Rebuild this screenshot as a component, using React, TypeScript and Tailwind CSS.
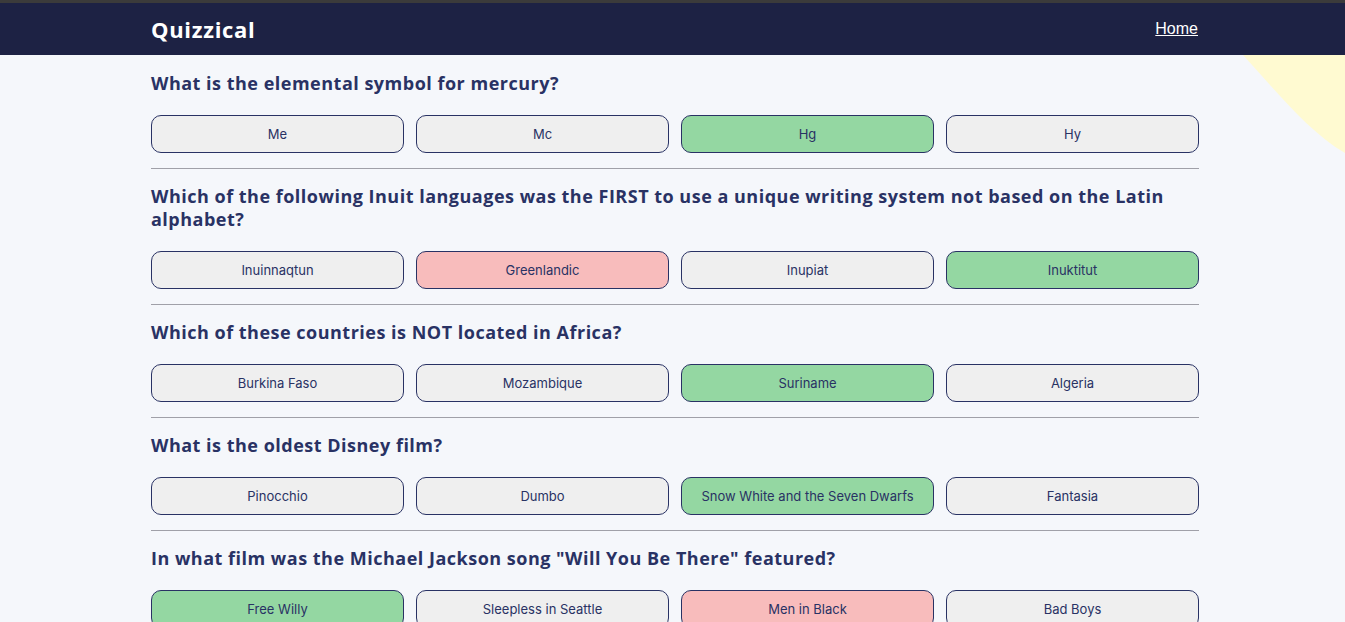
import React from "react";

type Q = { q: string; answers: { t: string; s?: "g" | "r" }[] };

const data: Q[] = [
  {
    q: "What is the elemental symbol for mercury?",
    answers: [{ t: "Me" }, { t: "Mc" }, { t: "Hg", s: "g" }, { t: "Hy" }],
  },
  {
    q: "Which of the following Inuit languages was the FIRST to use a unique writing system not based on the Latin alphabet?",
    answers: [{ t: "Inuinnaqtun" }, { t: "Greenlandic", s: "r" }, { t: "Inupiat" }, { t: "Inuktitut", s: "g" }],
  },
  {
    q: "Which of these countries is NOT located in Africa?",
    answers: [{ t: "Burkina Faso" }, { t: "Mozambique" }, { t: "Suriname", s: "g" }, { t: "Algeria" }],
  },
  {
    q: "What is the oldest Disney film?",
    answers: [{ t: "Pinocchio" }, { t: "Dumbo" }, { t: "Snow White and the Seven Dwarfs", s: "g" }, { t: "Fantasia" }],
  },
  {
    q: 'In what film was the Michael Jackson song "Will You Be There" featured?',
    answers: [{ t: "Free Willy", s: "g" }, { t: "Sleepless in Seattle" }, { t: "Men in Black", s: "r" }, { t: "Bad Boys" }],
  },
];

export default function App() {
  return (
    <div className="min-h-[622px] bg-[#f5f7fb] relative overflow-hidden">
      <div className="h-[3px] bg-[#3b3b3b]" />
      <header className="h-[52px] bg-[#1d2244]">
        <div className="w-[1047px] ml-[151px] h-full flex items-center justify-between">
          <span className="text-white text-[22px] font-bold tracking-[0.7px] font-['Open_Sans',sans-serif]">
            Quizzical
          </span>
          <a className="text-white text-[16px] underline font-['Liberation_Sans',Arial,sans-serif]">Home</a>
        </div>
      </header>
      <svg className="absolute right-0 top-[55px]" width="102" height="98" viewBox="0 0 102 98">
        <path d="M0 0 C 35 38, 65 76, 102 98 L102 0 Z" fill="#fffad1" />
      </svg>
      <main className="relative w-[1048px] ml-[151px] pt-[17px]">
        {data.map((item, i) => (
          <section key={i}>
            <h2 className="text-[#293264] text-[18px] leading-[23px] font-bold tracking-[0.5px] font-['Open_Sans',sans-serif] mb-5">
              {item.q}
            </h2>
            <div className="grid grid-cols-4 gap-3">
              {item.answers.map((a, j) => (
                <button
                  key={j}
                  className={
                    "h-[38px] pt-[2px] rounded-[10px] border border-[#293264] text-[#293264] text-[13px] font-['Inter',sans-serif] " +
                    (a.s === "g" ? "bg-[#94d7a2]" : a.s === "r" ? "bg-[#f8bcbc]" : "bg-[#efefef]")
                  }
                >
                  {a.t}
                </button>
              ))}
            </div>
            {i < data.length - 1 && <hr className="mt-[15px] mb-4 border-0 h-px bg-[#a0a0a8]" />}
          </section>
        ))}
      </main>
    </div>
  );
}
